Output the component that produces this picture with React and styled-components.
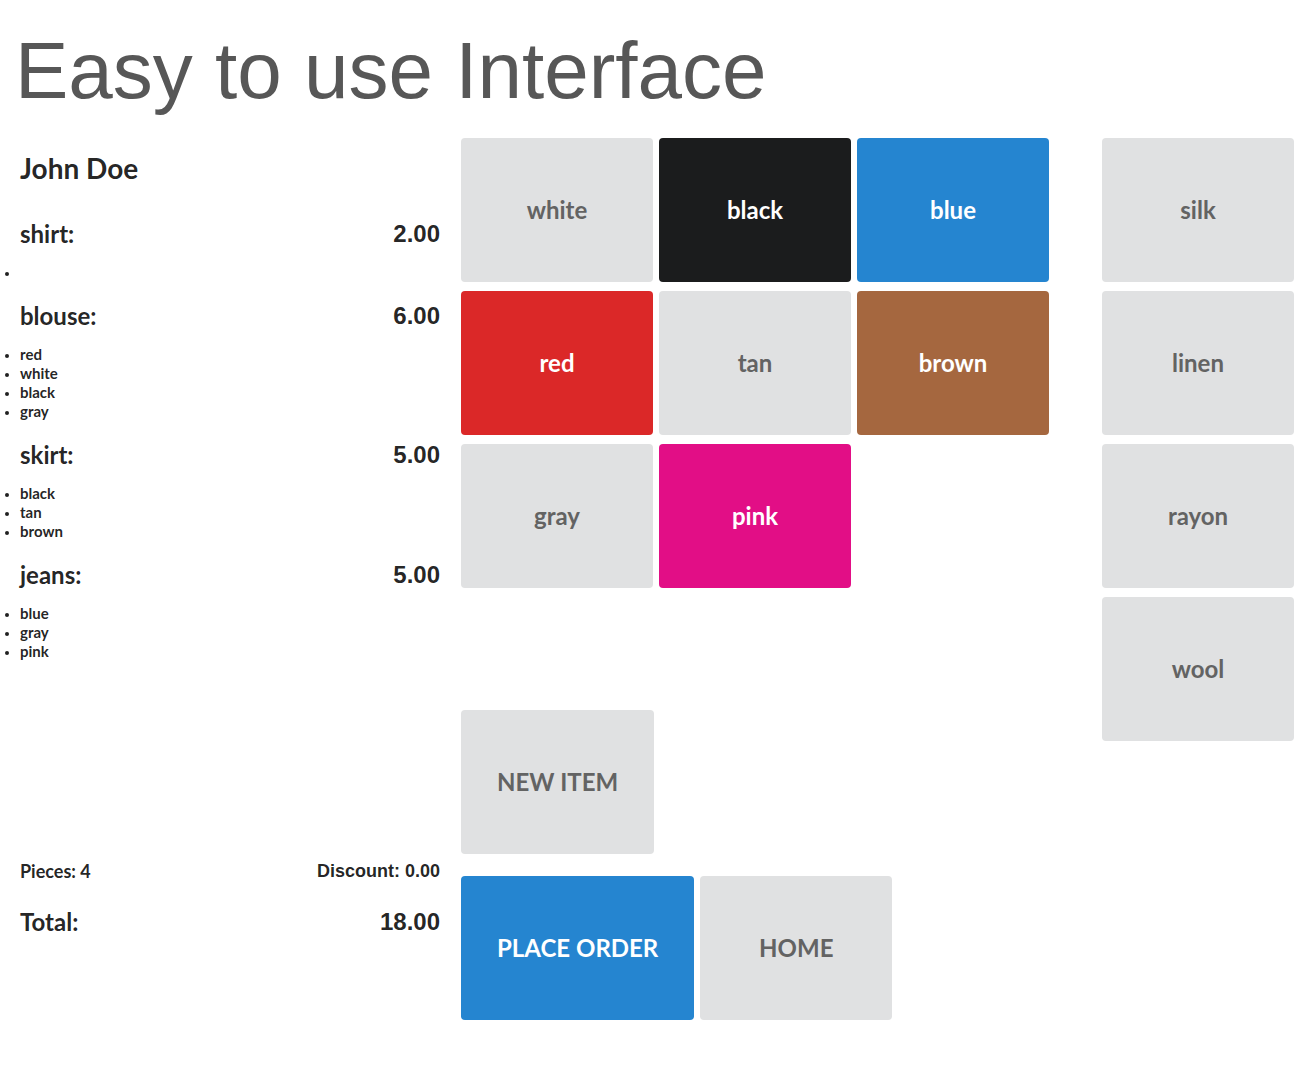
import React from "react";
import styled, { createGlobalStyle } from "styled-components";

const Global = createGlobalStyle`
  * { box-sizing: border-box; }
  body { margin: 0; background: #fff; color: rgba(0, 0, 0, 0.87); font-family: Lato, "Liberation Sans", sans-serif; }
`;

const lato = 'Lato, "Liberation Sans", sans-serif';
const arial = '"Liberation Sans", Arial, sans-serif';

const Page = styled.main`
  padding: 23px 17px 48px 0;
`;

const Title = styled.h1`
  margin: 0 0 19px;
  padding-left: 15px;
  font: 400 80px/96px ${arial};
  color: #575757;
`;

const Columns = styled.div`
  display: grid;
  grid-template-columns: 461px 1fr 192px;
  align-items: stretch;
`;

const Ticket = styled.section`
  display: flex;
  flex-direction: column;
  padding: 12px 21px 0 20px;
`;

const Customer = styled.h2`
  margin: 0 0 33px;
  font: 700 28px/36px ${lato};
`;

const Item = styled.article`
  margin-bottom: 19px;
`;

const Line = styled.div`
  display: flex;
  justify-content: space-between;
  align-items: center;
  font: 700 24px/30px ${lato};
`;

const Price = styled.span`
  font-family: ${arial};
`;

const Notes = styled.ul`
  margin: 14px 0 0;
  padding: 0;
  font: 700 15px/19px ${lato};
`;

const Note = styled.li`
  min-height: 19px;

  &::marker {
    font-size: 12px;
  }
`;

const Summary = styled.div`
  margin-top: auto;
  padding-bottom: 83px;
`;

const Counts = styled.div`
  display: flex;
  justify-content: space-between;
  margin-bottom: 24px;
  font: 700 18px/24px ${lato};
`;

const Discount = styled.span`
  font-family: ${arial};
`;

const Board = styled.section`
  display: flex;
  flex-direction: column;
`;

const Swatches = styled.div`
  display: grid;
  grid-template-columns: repeat(3, 192px);
  gap: 9px 6px;
`;

const Fabrics = styled.section`
  display: flex;
  flex-direction: column;
  gap: 9px;
`;

const Actions = styled.div`
  display: flex;
  gap: 6px;
  margin-top: ${(p) => p.$space}px;
`;

const Tile = styled.button`
  min-width: 192px;
  height: 144px;
  padding: 0 36px;
  border: 0;
  border-radius: 4px;
  background: ${(p) => p.$fill || "#e0e1e2"};
  color: ${(p) => (p.$fill ? "#fff" : "#636363")};
  font: 700 24px/24px ${lato};
  white-space: nowrap;
  cursor: pointer;
`;

const items = [
  { name: "shirt", price: "2.00", notes: [""] },
  { name: "blouse", price: "6.00", notes: ["red", "white", "black", "gray"] },
  { name: "skirt", price: "5.00", notes: ["black", "tan", "brown"] },
  { name: "jeans", price: "5.00", notes: ["blue", "gray", "pink"] },
];

const colors = [
  ["white"],
  ["black", "#1b1c1d"],
  ["blue", "#2585d0"],
  ["red", "#db2828"],
  ["tan"],
  ["brown", "#a5673f"],
  ["gray"],
  ["pink", "#e20e86"],
];

const fabrics = ["silk", "linen", "rayon", "wool"];

export default function App() {
  return (
    <>
      <Global />
      <Page>
        <Title>Easy to use Interface</Title>
        <Columns>
          <Ticket>
            <Customer>John Doe</Customer>
            {items.map((item) => (
              <Item key={item.name}>
                <Line>
                  <span>{item.name}:</span>
                  <Price>{item.price}</Price>
                </Line>
                <Notes>
                  {item.notes.map((note) => (
                    <Note key={note}>{note}</Note>
                  ))}
                </Notes>
              </Item>
            ))}
            <Summary>
              <Counts>
                <span>Pieces: 4</span>
                <Discount>Discount: 0.00</Discount>
              </Counts>
              <Line>
                <span>Total:</span>
                <Price>18.00</Price>
              </Line>
            </Summary>
          </Ticket>
          <Board>
            <Swatches>
              {colors.map(([name, fill]) => (
                <Tile key={name} type="button" $fill={fill}>
                  {name}
                </Tile>
              ))}
            </Swatches>
            <Actions $space={122}>
              <Tile type="button">NEW ITEM</Tile>
            </Actions>
            <Actions $space={22}>
              <Tile type="button" $fill="#2585d0">
                PLACE ORDER
              </Tile>
              <Tile type="button">HOME</Tile>
            </Actions>
          </Board>
          <Fabrics>
            {fabrics.map((name) => (
              <Tile key={name} type="button">
                {name}
              </Tile>
            ))}
          </Fabrics>
        </Columns>
      </Page>
    </>
  );
}
